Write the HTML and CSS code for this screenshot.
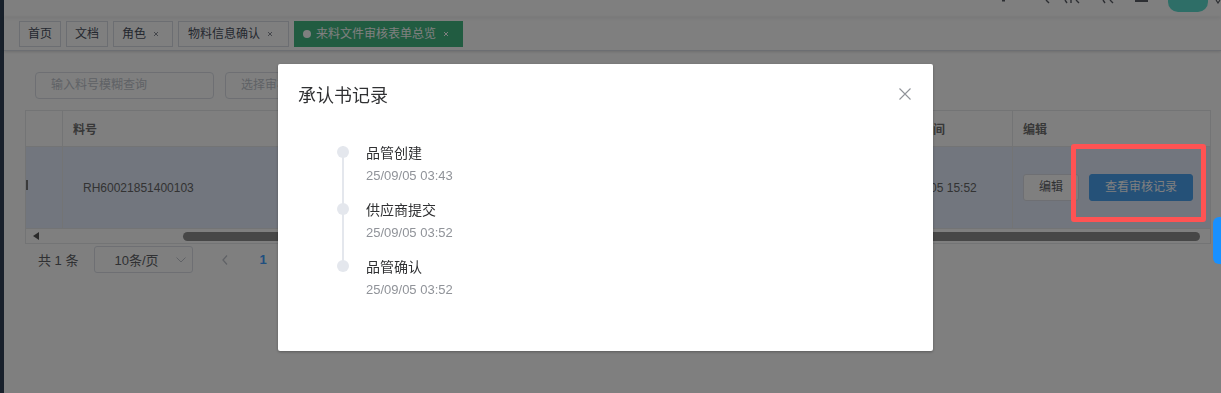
FILE: index.html
```html
<!DOCTYPE html>
<html lang="zh-CN">
<head>
  <meta charset="UTF-8">
  <meta name="viewport" content="width=device-width, initial-scale=1.0">
  <title>来料文件审核表单总览</title>
  <link rel="stylesheet" href="styles.css">
</head>
<body>
  <div class="app">
    <div class="sidebar"></div>

    <div class="main">
      <!-- top bar, only its lower edge is in view -->
      <div class="navbar">
        <svg class="nav-icons" width="160" height="4" viewBox="0 0 160 4">
          <rect x="7" y="0" width="3" height="1.5" fill="#5a5e66"/>
          <path d="M51 0 L54 3" stroke="#5a5e66" stroke-width="1.4"/>
          <path d="M70 0 L72 3 M76 0 L76 3 M81 0 L84 3" stroke="#5a5e66" stroke-width="1.4"/>
          <path d="M108 0 L110 3 M115 0 L118 3" stroke="#5a5e66" stroke-width="1.4"/>
          <rect x="140" y="0" width="13" height="2" fill="#5a5e66"/>
        </svg>
        <div class="avatar"></div>
        <svg class="caret" width="6" height="4" viewBox="0 0 6 4">
          <path d="M1 0 L3 3 L5 0" stroke="#5a5e66" stroke-width="1.2" fill="none"/>
        </svg>
      </div>

      <div class="tags-view">
        <span class="tag">首页</span>
        <span class="tag">文档</span>
        <span class="tag">角色<svg class="tag-close" viewBox="0 0 16 16"><path d="M6 6 L10 10 M10 6 L6 10"/></svg></span>
        <span class="tag wide">物料信息确认<svg class="tag-close" viewBox="0 0 16 16"><path d="M6 6 L10 10 M10 6 L6 10"/></svg></span>
        <span class="tag active"><i class="tag-dot"></i>来料文件审核表单总览<svg class="tag-close" viewBox="0 0 16 16"><path d="M6 6 L10 10 M10 6 L6 10"/></svg></span>
      </div>

      <div class="content">
        <div class="filter">
          <div class="input">输入料号模糊查询</div>
          <div class="input select-input">选择审核状态</div>
        </div>

        <div class="table-wrap">
          <table class="grid">
            <colgroup>
              <col style="width: 37px">
              <col style="width: 237px">
              <col style="width: 571px">
              <col style="width: 142px">
              <col style="width: 197px">
            </colgroup>
            <thead>
              <tr>
                <th></th>
                <th>料号</th>
                <th>物料名称</th>
                <th class="time-head">审核时间</th>
                <th>编辑</th>
              </tr>
            </thead>
            <tbody>
              <tr class="current">
                <td class="sel-cell"><span class="sel-bar"></span></td>
                <td class="code-cell">RH60021851400103</td>
                <td></td>
                <td class="time-cell">2025-09-05 15:52</td>
                <td>
                  <span class="btn">编辑</span><span class="btn btn-primary">查看审核记录</span>
                </td>
              </tr>
            </tbody>
          </table>
          <div class="hscroll">
            <span class="scroll-arrow"></span>
            <span class="scroll-thumb"></span>
          </div>
        </div>

        <div class="pagination">
          <span class="total">共 1 条</span>
          <div class="size-select">
            <span>10条/页</span>
            <svg width="10" height="6" viewBox="0 0 10 6"><path d="M0.5 0.5 L5 5 L9.5 0.5" stroke="#c0c4cc" fill="none"/></svg>
          </div>
          <svg class="prev" width="6" height="10" viewBox="0 0 6 10"><path d="M5 0.5 L1 5 L5 9.5" stroke="#c0c4cc" stroke-width="1.3" fill="none"/></svg>
          <span class="pager-num">1</span>
        </div>
      </div>
    </div>
  </div>

  <div class="mask"></div>

  <div class="dialog-wrapper">
    <div class="dialog">
      <div class="dialog-header">
        <span class="dialog-title">承认书记录</span>
        <svg class="dialog-close" width="12" height="12" viewBox="0 0 12 12">
          <path d="M0.5 0.5 L11.5 11.5 M11.5 0.5 L0.5 11.5" stroke="#909399" stroke-width="1.1"/>
        </svg>
      </div>
      <div class="dialog-body">
        <ul class="timeline">
          <li class="timeline-item">
            <div class="timeline-title">品管创建</div>
            <div class="timeline-time">25/09/05 03:43</div>
          </li>
          <li class="timeline-item">
            <div class="timeline-title">供应商提交</div>
            <div class="timeline-time">25/09/05 03:52</div>
          </li>
          <li class="timeline-item">
            <div class="timeline-title">品管确认</div>
            <div class="timeline-time">25/09/05 03:52</div>
          </li>
        </ul>
      </div>
    </div>
  </div>

  <div class="mark-box"></div>
  <div class="panel-handle"></div>
</body>
</html>
```

FILE: styles.css
```css
* {
  box-sizing: border-box;
}

body {
  margin: 0;
  font-family: "Liberation Sans", "Noto Sans CJK SC", sans-serif;
  font-size: 12px;
  color: #606266;
  background: #fff;
  overflow: hidden;
}

.app {
  display: flex;
  height: 393px;
}

.sidebar {
  flex: none;
  width: 4px;
  background: #304156;
}

.main {
  flex: 1;
  min-width: 0;
}

/* navbar */
.navbar {
  height: 17px;
  display: flex;
  justify-content: flex-end;
  align-items: flex-start;
  box-shadow: 0 1px 4px rgba(0, 21, 41, 0.08);
}
.nav-icons {
  display: block;
}
.avatar {
  width: 40px;
  height: 12px;
  margin-left: 13px;
  border-radius: 0 0 10px 10px;
  background: #5ddcce;
}
.caret {
  display: block;
  margin-left: 7px;
}

/* tags */
.tags-view {
  height: 34px;
  display: flex;
  align-items: flex-start;
  gap: 5px;
  padding: 4px 0 0 15px;
  border-bottom: 1px solid #d8dce5;
  box-shadow: 0 1px 3px 0 rgba(0, 0, 0, 0.12), 0 0 3px 0 rgba(0, 0, 0, 0.04);
}
.tag {
  display: inline-flex;
  align-items: center;
  height: 26px;
  padding: 0 8px;
  border: 1px solid #d8dce5;
  background: #fff;
  color: #495060;
  font-size: 12px;
  line-height: 24px;
}
.tag.wide {
  padding-right: 10px;
  padding-left: 9px;
}
.tag.active {
  background: #42b983;
  border-color: #42b983;
  color: #fff;
}
.tag-dot {
  width: 8px;
  height: 8px;
  margin-right: 5px;
  border-radius: 50%;
  background: #fff;
}
.tag-close {
  width: 16px;
  height: 16px;
  margin-left: 2px;
  stroke: #8a8f99;
  stroke-width: 1;
}
.tag.active .tag-close {
  stroke: #fff;
}

/* page content */
.content {
  padding: 21px 10px 0 21px;
}

.filter {
  display: flex;
  gap: 11px;
  padding-left: 10px;
}
.input {
  width: 179px;
  height: 27px;
  padding-left: 15px;
  border: 1px solid #dcdfe6;
  border-radius: 4px;
  color: #c0c4cc;
  line-height: 25px;
}
.select-input {
  width: 200px;
}

.table-wrap {
  margin-top: 11px;
  border: 1px solid #e6e8eb;
}
.grid {
  width: 100%;
  table-layout: fixed;
  border-spacing: 0;
}
.grid th,
.grid td {
  padding: 0 10px;
  border-right: 1px solid #e6e8eb;
  border-bottom: 1px solid #e6e8eb;
  text-align: left;
  vertical-align: middle;
  white-space: nowrap;
  overflow: hidden;
}
.grid th:last-child,
.grid td:last-child {
  border-right: none;
}
.grid th {
  height: 36px;
  color: #707070;
  font-weight: bold;
  font-size: 12px;
}
.grid th.time-head {
  padding-left: 26px;
}
.grid td {
  height: 82px;
  color: #666;
  font-size: 12px;
}
.grid tr.current td {
  background: #e5edfc;
}
.grid td.sel-cell {
  padding: 0;
}
.sel-bar {
  display: block;
  width: 2px;
  height: 10px;
  margin-top: -5px;
  background: #777;
}
.grid td.code-cell {
  padding-left: 20px;
}
.grid td.time-cell {
  padding-left: 11px;
}

.btn {
  display: inline-block;
  height: 27px;
  padding: 0 15px;
  border: 1px solid #dcdfe6;
  border-radius: 3px;
  background: #fff;
  color: #606266;
  line-height: 25px;
  vertical-align: middle;
}
.btn-primary {
  margin-left: 10px;
  border-color: #4aa2f0;
  background: #4aa2f0;
  color: #fff;
}

.hscroll {
  height: 14px;
  display: flex;
  align-items: center;
}
.scroll-arrow {
  margin-left: 7px;
  border-top: 4px solid transparent;
  border-bottom: 4px solid transparent;
  border-right: 6px solid #555;
}
.scroll-thumb {
  flex: 1;
  height: 9px;
  margin: 0 10px 0 144px;
  border-radius: 5px;
  background: #8e8e8e;
}

.pagination {
  display: flex;
  align-items: center;
  height: 27px;
  margin-top: 2px;
  padding-left: 13px;
  font-size: 13px;
}
.size-select {
  display: flex;
  align-items: center;
  justify-content: space-between;
  width: 99px;
  height: 27px;
  margin-left: 16px;
  padding: 0 6px 0 19px;
  border: 1px solid #dcdfe6;
  border-radius: 3px;
}
.prev {
  margin-left: 29px;
}
.pager-num {
  margin-left: 31px;
  color: #409eff;
  font-weight: bold;
}

/* modal */
.mask {
  position: fixed;
  inset: 0;
  z-index: 2000;
  background: rgba(0, 0, 0, 0.5);
}

.dialog-wrapper {
  position: fixed;
  inset: 0;
  z-index: 2001;
  padding: 64px 0 0 278px;
}
.dialog {
  width: 655px;
  border-radius: 2px;
  background: #fff;
  box-shadow: 0 1px 3px rgba(0, 0, 0, 0.3);
}
.dialog-header {
  display: flex;
  justify-content: space-between;
  align-items: flex-start;
  padding: 20px 22px 10px 20px;
}
.dialog-title {
  color: #303133;
  font-size: 18px;
  line-height: 24px;
}
.dialog-close {
  margin-top: 4px;
}
.dialog-body {
  padding: 30px 20px 32px 59px;
}

.timeline {
  margin: 0;
  padding: 0;
  list-style: none;
}
.timeline-item {
  position: relative;
  padding: 0 0 23px 29px;
}
.timeline-item::before {
  content: "";
  position: absolute;
  left: 5px;
  top: 0;
  width: 2px;
  height: 100%;
  background: #e4e7ed;
}
.timeline-item:last-child::before {
  display: none;
}
.timeline-item::after {
  content: "";
  position: absolute;
  left: 0;
  top: 0;
  width: 12px;
  height: 12px;
  border-radius: 50%;
  background: #e4e7ed;
}
.timeline-title {
  margin-top: -2px;
  color: #303133;
  font-size: 14px;
  line-height: 14px;
}
.timeline-time {
  margin-top: 9px;
  color: #909399;
  font-size: 13px;
  line-height: 13px;
}

/* annotation frame and the side panel handle sit above the mask */
.mark-box {
  position: fixed;
  left: 1071px;
  top: 144px;
  z-index: 2002;
  width: 135px;
  height: 78px;
  border: 5px solid #ff5353;
  border-radius: 3px;
}
.panel-handle {
  position: fixed;
  right: 0;
  top: 217px;
  z-index: 2002;
  width: 8px;
  height: 47px;
  border-radius: 6px 0 0 6px;
  background: #1890ff;
}
```
